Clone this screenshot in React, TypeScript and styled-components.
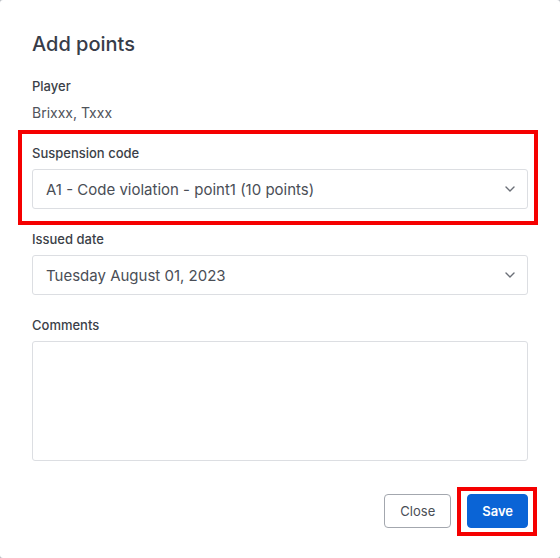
import { FC, ReactNode } from "react";
import styled, { createGlobalStyle } from "styled-components";

const GlobalStyle = createGlobalStyle`
    html, body {
        margin: 0;
        padding: 0;
        background: #b9bdc3;
    }
    #root {
        width: 560px;
        height: 558px;
    }
    * {
        box-sizing: border-box;
    }
`;

const Modal = styled.div`
    width: 560px;
    height: 558px;
    background: #ffffff;
    border-radius: 3px;
    padding: 30px 32px 0 32px;
    display: flex;
    flex-direction: column;
    font-family: Inter, "Noto Sans", sans-serif;
    color: #3a3e48;
`;

const Title = styled.h2`
    margin: 0 0 19px 0;
    font-size: 20px;
    line-height: 28px;
    font-weight: 500;
    color: #373c48;
`;

const Field = styled.div<{ $highlight?: boolean; $gap?: number }>`
    position: relative;
    display: flex;
    flex-direction: column;
    gap: ${({ $gap }) => $gap ?? 7}px;
    margin-bottom: 21px;

    ${({ $highlight }) =>
        $highlight &&
        `
        &::after {
            content: "";
            position: absolute;
            left: -14px;
            right: -10px;
            top: -14px;
            bottom: -16px;
            border: 4px solid #f50000;
            pointer-events: none;
        }
    `}
`;

const Label = styled.label`
    font-size: 13px;
    line-height: 18px;
    font-weight: 500;
    color: #3b3f48;
`;

const Value = styled.div`
    font-size: 14px;
    line-height: 20px;
    color: #4f535b;
`;

const SelectBox = styled.div`
    height: 40px;
    border: 1px solid #dcdee2;
    border-radius: 3px;
    display: flex;
    align-items: center;
    justify-content: space-between;
    padding: 0 12px 0 13px;
    font-size: 15px;
    color: #4a4e56;
`;

const TextArea = styled.div`
    height: 120px;
    border: 1px solid #dcdee2;
    border-radius: 3px;
`;

const Footer = styled.div`
    display: flex;
    justify-content: flex-end;
    align-items: center;
    gap: 16px;
    margin-top: 12px;
`;

const Button = styled.button<{ $primary?: boolean; $highlight?: boolean }>`
    position: relative;
    height: 34px;
    padding: 0 ${({ $primary }) => ($primary ? 14 : 15)}px;
    border-radius: 4px;
    font-family: Inter, "Noto Sans", sans-serif;
    font-size: 13px;
    font-weight: ${({ $primary }) => ($primary ? 600 : 400)};
    border: 1px solid ${({ $primary }) => ($primary ? "#0a64d6" : "#a3a7ae")};
    background: ${({ $primary }) => ($primary ? "#0a64d6" : "#ffffff")};
    color: ${({ $primary }) => ($primary ? "#ffffff" : "#4a4e56")};

    ${({ $highlight }) =>
        $highlight &&
        `
        &::after {
            content: "";
            position: absolute;
            left: -11px;
            right: -10px;
            top: -8px;
            bottom: -9px;
            border: 4px solid #f50000;
            pointer-events: none;
        }
    `}
`;

const Chevron = () => (
    <svg width="10" height="6" viewBox="0 0 10 6" fill="none">
        <path d="M1 1l4 4 4-4" stroke="#6b6f77" strokeWidth="1.4" strokeLinecap="round" strokeLinejoin="round" />
    </svg>
);

const Select: FC<{ children: ReactNode }> = ({ children }) => (
    <SelectBox>
        <span>{children}</span>
        <Chevron />
    </SelectBox>
);

const App = () => {
    return (
        <>
            <GlobalStyle />
            <Modal>
                <Title>Add points</Title>
                <Field $gap={8}>
                    <Label>Player</Label>
                    <Value>Brixxx, Txxx</Value>
                </Field>
                <Field $highlight>
                    <Label>Suspension code</Label>
                    <Select>A1 - Code violation - point1 (10 points)</Select>
                </Field>
                <Field>
                    <Label>Issued date</Label>
                    <Select>Tuesday August 01, 2023</Select>
                </Field>
                <Field>
                    <Label>Comments</Label>
                    <TextArea />
                </Field>
                <Footer>
                    <Button>Close</Button>
                    <Button $primary $highlight>
                        Save
                    </Button>
                </Footer>
            </Modal>
        </>
    );
};

export default App;
